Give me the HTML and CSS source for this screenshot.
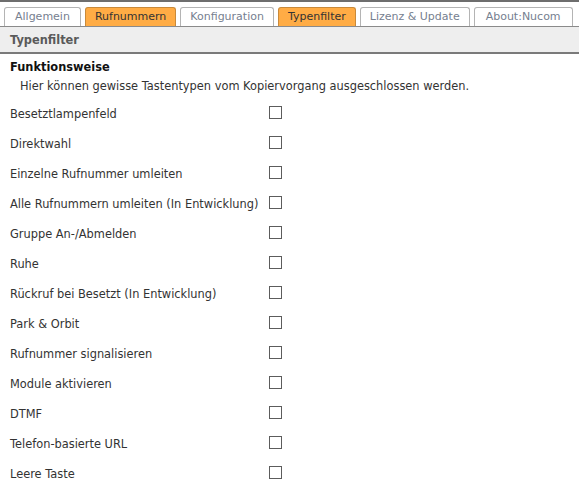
FILE: index.html
```html
<!DOCTYPE html>
<html lang="de">
<head>
<meta charset="utf-8">
<link rel="stylesheet" href="styles.css">
</head>
<body>
<div class="tabs">
  <span class="tab first">Allgemein</span>
  <span class="tab active">Rufnummern</span>
  <span class="tab">Konfiguration</span>
  <span class="tab active">Typenfilter</span>
  <span class="tab">Lizenz &amp; Update</span>
  <span class="tab wide">About:Nucom</span>
</div>
<div class="header">Typenfilter</div>
<div class="content">
  <div class="title">Funktionsweise</div>
  <div class="desc">Hier können gewisse Tastentypen vom Kopiervorgang ausgeschlossen werden.</div>
  <div class="rows">
    <div class="row"><span class="label">Besetztlampenfeld</span><span class="box"></span></div>
    <div class="row"><span class="label">Direktwahl</span><span class="box"></span></div>
    <div class="row"><span class="label">Einzelne Rufnummer umleiten</span><span class="box"></span></div>
    <div class="row"><span class="label">Alle Rufnummern umleiten (In Entwicklung)</span><span class="box"></span></div>
    <div class="row"><span class="label">Gruppe An-/Abmelden</span><span class="box"></span></div>
    <div class="row"><span class="label">Ruhe</span><span class="box"></span></div>
    <div class="row"><span class="label">Rückruf bei Besetzt (In Entwicklung)</span><span class="box"></span></div>
    <div class="row"><span class="label">Park &amp; Orbit</span><span class="box"></span></div>
    <div class="row"><span class="label">Rufnummer signalisieren</span><span class="box"></span></div>
    <div class="row"><span class="label">Module aktivieren</span><span class="box"></span></div>
    <div class="row"><span class="label">DTMF</span><span class="box"></span></div>
    <div class="row"><span class="label">Telefon-basierte URL</span><span class="box"></span></div>
    <div class="row"><span class="label">Leere Taste</span><span class="box"></span></div>
  </div>
</div>
</body>
</html>
```

FILE: styles.css
```css
html, body {
  margin: 0;
  padding: 0;
  background: #fff;
}
body {
  font-family: "DejaVu Sans", Verdana, sans-serif;
  font-size: 11.4px;
  color: #222;
  border-top: 2px solid #6e6e6e;
}
.tabs {
  display: flex;
  gap: 4px;
  padding: 5px 0 0 4px;
  border-bottom: 1px solid #8a8a8a;
  height: 19px;
}
.tab {
  display: flex;
  align-items: center;
  height: 18px;
  padding: 0 9px;
  border: 1px solid #b4b4b4;
  border-bottom: none;
  border-radius: 3px 3px 0 0;
  color: #76808f;
  background: #fff;
  font-size: 11px;
  line-height: 18px;
  white-space: nowrap;
}
.tab.first {
  padding: 0 10px;
}
.tab.wide {
  padding: 0 11px;
}
.tab.active {
  background: #ffac45;
  border-color: #c98a3a;
  color: #333;
}
.header {
  height: 25px;
  line-height: 26px;
  background: #eeeeee;
  border-bottom: 2px solid #7a7a7a;
  padding-left: 10px;
  font-weight: bold;
  color: #5a5a5a;
}
.content {
  padding: 4px 0 0 10px;
}
.title {
  font-weight: bold;
  color: #111;
  line-height: 18px;
}
.desc {
  padding-left: 10px;
  line-height: 21px;
  color: #333;
}
.rows {
  padding-top: 2px;
}
.row {
  display: grid;
  grid-template-columns: 259px 13px;
  align-items: center;
  height: 30px;
  color: #333;
}
.box {
  width: 11px;
  height: 11px;
  border: 1px solid #5c5c5c;
  background: #fff;
  margin-top: -3px;
}
```
